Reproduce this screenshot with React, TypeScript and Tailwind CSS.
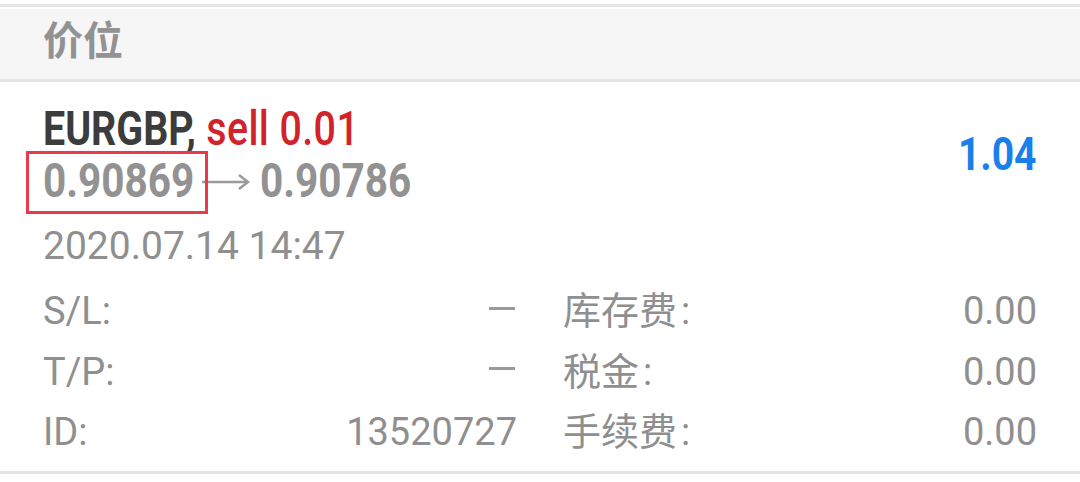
import React from "react";

const font = { fontFamily: "Roboto, 'Noto Sans CJK SC', sans-serif" };

function Row({ label, value }: { label: string; value: string }) {
  return (
    <div className="flex justify-between text-[38px] leading-[60.5px] text-[#8f8f8f]">
      <span>{label}</span>
      <span>{value}</span>
    </div>
  );
}

function CjkRow({ label, value }: { label: string; value: string }) {
  return (
    <div className="flex justify-between text-[38px] leading-[60.5px] text-[#8f8f8f]">
      <span>
        {label}
        <span className="ml-[4px]">:</span>
      </span>
      <span>{value}</span>
    </div>
  );
}

function Dash() {
  return (
    <span className="flex items-center h-[60.5px]">
      <span className="block w-[26px] h-[3px] bg-[#9a9a9a] mr-[2px] mt-[-6px]" />
    </span>
  );
}

export default function App() {
  return (
    <div className="w-[1080px] h-[482px] bg-white overflow-hidden" style={font}>
      <div className="pt-[4px]">
        <div className="h-[3px] bg-[#e6e6e6]" />
        <div className="h-[2px] bg-white" />
        <div className="h-[70px] bg-[#f6f6f6] border-b-[3px] border-[#e4e4e4] flex items-center pl-[43px] box-content">
          <span className="text-[40px] leading-none text-[#929292] font-semibold mt-[-4px]">价位</span>
        </div>
      </div>

      <div className="px-[43px] pt-[21px] pb-[8px] border-b-[3px] border-[#e4e4e4]">
        <div className="flex items-center justify-between">
          <div>
            <div className="origin-left scale-x-[0.82] whitespace-nowrap text-[48px] leading-[52px]">
              <span className="font-bold text-[#3c3c3c]">EURGBP,</span>
              <span className="font-medium text-[#d2232a] tracking-[0.5px]"> sell 0.01</span>
            </div>
            <div className="relative flex items-center h-[52px]">
              <div className="absolute left-[-17px] top-[-4px] w-[182px] h-[63px] border-[3px] border-[#e93a4b]" />
              <div className="flex items-center whitespace-nowrap text-[48px] leading-[52px] font-bold text-[#929292]">
                <span className="inline-block origin-left scale-x-[0.845] w-[148px]">0.90869</span>
                <svg width="50" height="20" viewBox="0 0 50 20" className="ml-[11px] mt-[2px]">
                  <line x1="0" y1="10" x2="46" y2="10" stroke="#9a9a9a" strokeWidth="2.5" />
                  <polyline points="37,3 46,10 37,17" fill="none" stroke="#9a9a9a" strokeWidth="2.5" />
                </svg>
                <span className="inline-block origin-left scale-x-[0.845] ml-[8px]">0.90786</span>
              </div>
            </div>
          </div>
          <div className="origin-right scale-x-[0.85] text-[46px] leading-none font-bold text-[#1a7fe8] mt-[-2px]">1.04</div>
        </div>

        <div className="mt-[15px] text-[39px] leading-[48px] text-[#8f8f8f]">2020.07.14 14:47</div>

        <div className="mt-[11px] grid grid-cols-2 gap-x-[46px]">
          <div>
            <div className="flex justify-between text-[38px] leading-[60.5px] text-[#8f8f8f]">
              <span>S/L:</span>
              <Dash />
            </div>
            <div className="flex justify-between text-[38px] leading-[60.5px] text-[#8f8f8f]">
              <span>T/P:</span>
              <Dash />
            </div>
            <Row label="ID:" value="13520727" />
          </div>
          <div>
            <CjkRow label="库存费" value="0.00" />
            <CjkRow label="税金" value="0.00" />
            <CjkRow label="手续费" value="0.00" />
          </div>
        </div>
      </div>
    </div>
  );
}
